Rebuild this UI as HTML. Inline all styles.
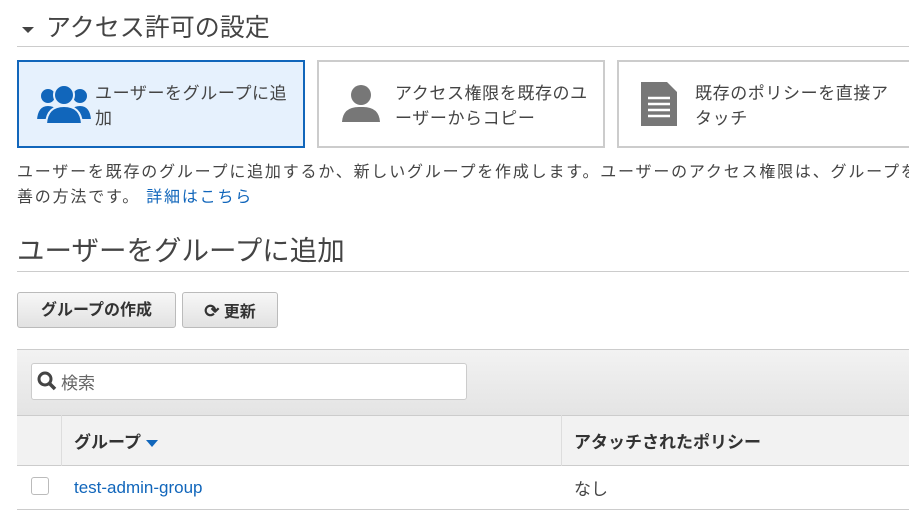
<!DOCTYPE html>
<html><head><meta charset="utf-8"><style>
body{margin:0;width:909px;height:512px;overflow:hidden;background:#fff;font-family:"Liberation Sans","Noto Sans CJK JP",sans-serif;color:#444;position:relative}
.a{position:absolute}
.card{position:absolute;top:60px;height:84px;border:2px solid #ccc;background:#fff;box-sizing:content-box}
.card .t{position:absolute;left:76px;top:19px;font-size:17px;line-height:25px;color:#444;width:198px;letter-spacing:0.6px}
.btn{position:absolute;top:292px;height:36px;border:1px solid #bbb;border-radius:3px;background:linear-gradient(#f7f7f7,#e2e2e2);font-weight:bold;font-size:16px;color:#333;line-height:36px;text-align:center;box-sizing:border-box}
</style></head><body>
<div class="a" style="left:22px;top:27px;width:0;height:0;border-left:6px solid transparent;border-right:6px solid transparent;border-top:6px solid #444"></div>
<div class="a" style="left:46px;top:8px;font-size:25px;color:#444">アクセス許可の設定</div>
<div class="a" style="left:17px;top:46px;width:892px;height:1px;background:#ccc"></div>

<div class="card" style="left:17px;width:284px;border-color:#1166bb;background:#e6f1fd">
<svg class="a" style="left:17px;top:22px" width="56" height="40" viewBox="0 0 56 40"><g fill="#1166bb" stroke="#e6f1fd" stroke-width="2"><circle cx="12" cy="12" r="8"/><path d="M0 36 Q1 21 12 21 Q24 21 25 36Z"/><circle cx="44" cy="12" r="8"/><path d="M31 36 Q32 21 44 21 Q55 21 56 36Z"/><circle cx="28" cy="11" r="10"/><path d="M10 40 Q11 22 28 22 Q45 22 46 40Z"/></g></svg>
<div class="t" style="left:76px">ユーザーをグループに追加</div></div>
<div class="card" style="left:317px;width:284px">
<svg class="a" style="left:22px;top:22px" width="40" height="40" viewBox="0 0 40 40"><circle cx="20" cy="11" r="10" fill="#777"/><path d="M1 38 Q2 22 20 23 Q38 22 39 38Z" fill="#777"/></svg>
<div class="t" style="width:205px">アクセス権限を既存のユーザーからコピー</div></div>
<div class="card" style="left:617px;width:290px;border-right:none">
<svg class="a" style="left:22px;top:20px" width="36" height="44" viewBox="0 0 36 44"><path d="M0 0H26L36 10V44H0Z" fill="#777"/><g stroke="#fff" stroke-width="2.5"><path d="M7 16H29M7 22H29M7 28H29M7 34H29"/></g></svg>
<div class="t" style="width:205px">既存のポリシーを直接アタッチ</div></div>

<div class="a" style="left:17px;top:160px;font-size:16px;line-height:25px;white-space:nowrap;color:#444;letter-spacing:1.8px">ユーザーを既存のグループに追加するか、新しいグループを作成します。ユーザーのアクセス権限は、グループを<br>善の方法です。 <span style="color:#1166bb">詳細はこちら</span></div>
<div class="a" style="left:17px;top:228px;font-size:27.5px;color:#444">ユーザーをグループに追加</div>
<div class="a" style="left:17px;top:271px;width:892px;height:1px;background:#ccc"></div>

<div class="btn" style="left:17px;width:159px">グループの作成</div>
<div class="btn" style="left:182px;width:96px"><span style="font-size:18px">⟳</span> 更新</div>

<div class="a" style="left:17px;top:349px;width:892px;height:66px;background:linear-gradient(#f2f2f2,#e4e4e4);border-top:1px solid #ccc;box-sizing:border-box"></div>
<div class="a" style="left:31px;top:363px;width:436px;height:37px;background:#fff;border:1px solid #ccc;border-radius:3px;box-sizing:border-box"></div>
<svg class="a" style="left:37px;top:371px" width="20" height="20" viewBox="0 0 20 20"><circle cx="8" cy="8" r="6" fill="none" stroke="#444" stroke-width="3"/><path d="M12 12L18 18" stroke="#444" stroke-width="3.5"/></svg>
<div class="a" style="left:61px;top:369px;font-size:17px;color:#666">検索</div>

<div class="a" style="left:17px;top:415px;width:892px;height:51px;background:#f2f2f2;border-top:1px solid #ccc;border-bottom:1px solid #ccc;box-sizing:border-box"></div>
<div class="a" style="left:61px;top:415px;width:1px;height:51px;background:#ddd"></div>
<div class="a" style="left:561px;top:415px;width:1px;height:51px;background:#ddd"></div>
<div class="a" style="left:74px;top:428px;font-size:17px;font-weight:bold;color:#333">グループ <span style="display:inline-block;width:0;height:0;border-left:6px solid transparent;border-right:6px solid transparent;border-top:7px solid #1166bb;vertical-align:middle"></span></div>
<div class="a" style="left:574px;top:428px;font-size:17px;font-weight:bold;color:#333">アタッチされたポリシー</div>
<div class="a" style="left:31px;top:477px;width:18px;height:18px;border:1px solid #bbb;border-radius:3px;box-sizing:border-box;background:#fff"></div>
<div class="a" style="left:74px;top:478px;font-size:17px;color:#1166bb">test-admin-group</div>
<div class="a" style="left:574px;top:475px;font-size:17px;color:#444">なし</div>
<div class="a" style="left:17px;top:509px;width:892px;height:1px;background:#ccc"></div>
</body></html>
